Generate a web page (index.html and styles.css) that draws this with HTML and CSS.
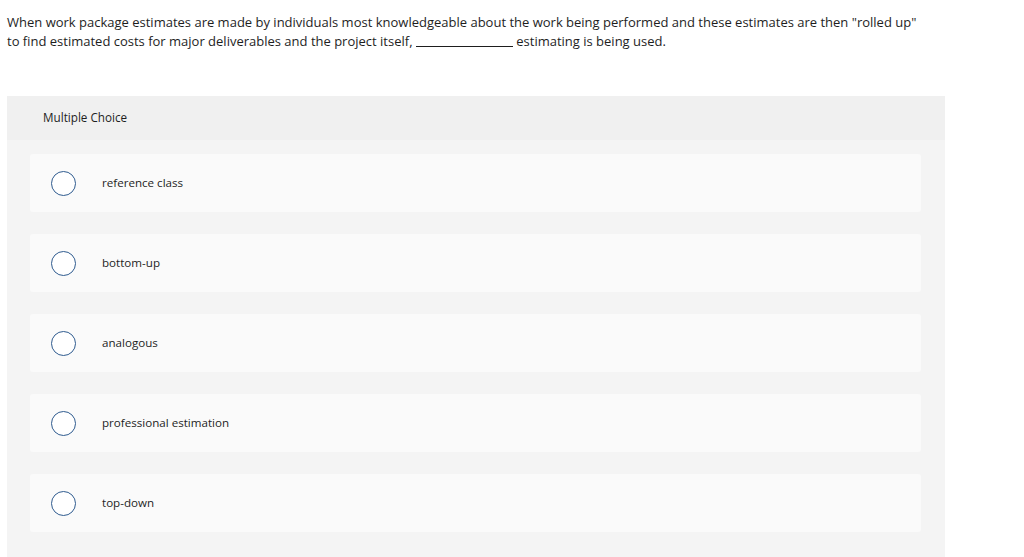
FILE: index.html
```html
<!DOCTYPE html>
<html lang="en">
<head>
    <meta charset="UTF-8">
    <title>Multiple Choice</title>
    <link rel="stylesheet" href="styles.css">
</head>
<body>
    <p class="prompt">When work package estimates are made by individuals most knowledgeable about the work being performed and these estimates are then "rolled up" to find estimated costs for major deliverables and the project itself, <span class="blank"></span> estimating is being used.</p>
    <div class="question">
        <div class="question-header">Multiple Choice</div>
        <div class="choices">
            <label class="choice"><span class="radio"></span><span class="choice-text">reference class</span></label>
            <label class="choice"><span class="radio"></span><span class="choice-text">bottom-up</span></label>
            <label class="choice"><span class="radio"></span><span class="choice-text">analogous</span></label>
            <label class="choice"><span class="radio"></span><span class="choice-text">professional estimation</span></label>
            <label class="choice"><span class="radio"></span><span class="choice-text">top-down</span></label>
        </div>
    </div>
</body>
</html>
```
FILE: styles.css
```css
body {
    margin: 0;
    padding: 0 79px 0 7px;
    font-family: "Open Sans", "Liberation Sans", sans-serif;
    color: #1e1e1e;
    background: white;
}
.prompt {
    margin: 13px 0 0;
    font-size: 13px;
    line-height: 19px;
    width: 920px;
}
.blank {
    display: inline-block;
    width: 97px;
    border-bottom: 1px solid #1e1e1e;
    vertical-align: -1px;
}
.question {
    margin-top: 45px;
    background: #f4f4f4;
    width: 938px;
    height: 470px;
}
.question-header {
    background: #f0f0f0;
    height: 44px;
    padding: 0 0 2px 36px;
    box-sizing: border-box;
    display: flex;
    align-items: center;
    font-size: 11.7px;
}
.choices {
    display: flex;
    flex-direction: column;
    gap: 22px;
    padding: 14px 24px 0 23px;
}
.choice {
    display: flex;
    align-items: center;
    height: 58px;
    background: #fafafa;
    border-radius: 3px;
    padding-left: 21px;
    font-size: 11.6px;
    cursor: pointer;
}
.choice-text {
    margin-top: -1px;
}
.radio {
    width: 23px;
    height: 23px;
    border: 1px solid #2f5b8f;
    border-radius: 50%;
    background: white;
    margin-right: 26px;
}
```
